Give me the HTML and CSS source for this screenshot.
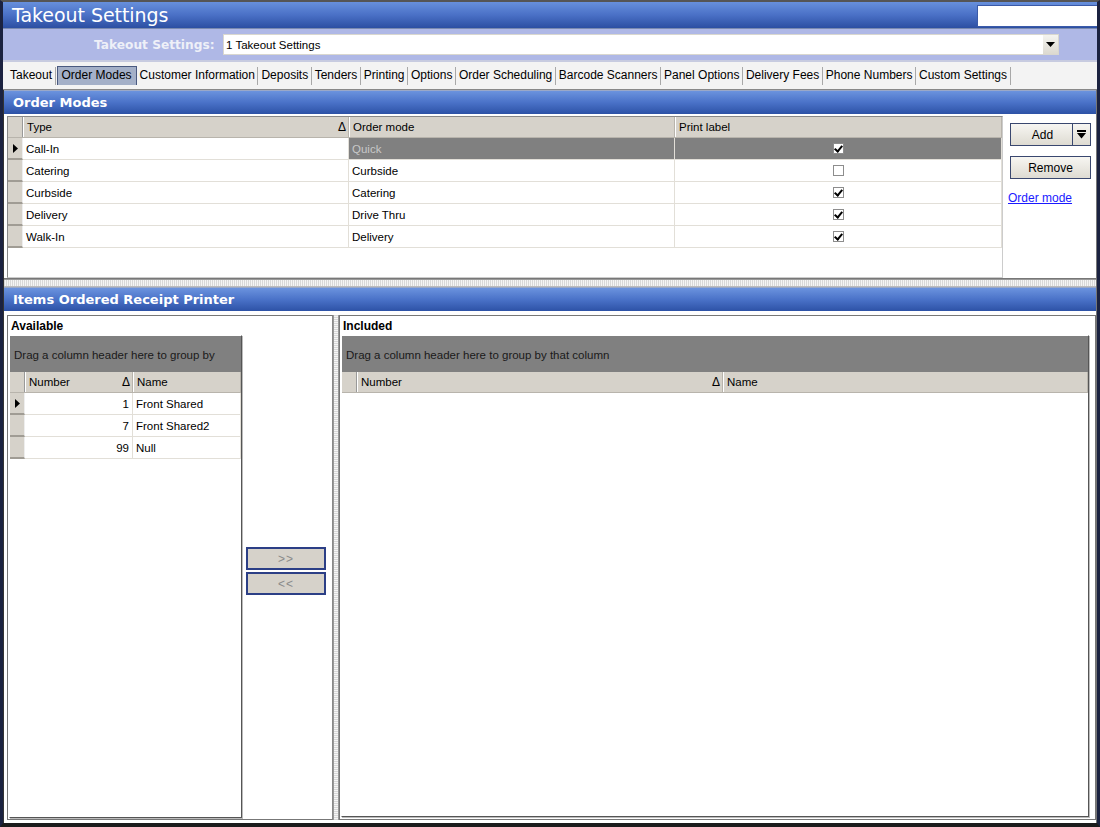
FILE: index.html
```html
<!DOCTYPE html>
<html>
<head>
<meta charset="utf-8">
<link rel="stylesheet" href="styles.css">
</head>
<body>
<div class="window">
  <div class="titlebar">
    <span class="title">Takeout Settings</span>
    <div class="title-box"></div>
  </div>
  <div class="settings-row">
    <span class="settings-label">Takeout Settings:</span>
    <div class="combo">
      <span class="combo-text">1 Takeout Settings</span>
      <span class="combo-btn"><svg width="9" height="6" viewBox="0 0 9 6"><path d="M0 0H9L4.5 5Z" fill="#000"/></svg></span>
    </div>
  </div>
  <div class="tabs">
    <span class="tab">Takeout</span>
    <span class="tab active">Order Modes</span>
    <span class="tab">Customer Information</span>
    <span class="tab">Deposits</span>
    <span class="tab">Tenders</span>
    <span class="tab">Printing</span>
    <span class="tab">Options</span>
    <span class="tab">Order Scheduling</span>
    <span class="tab">Barcode Scanners</span>
    <span class="tab">Panel Options</span>
    <span class="tab">Delivery Fees</span>
    <span class="tab">Phone Numbers</span>
    <span class="tab">Custom Settings</span>
  </div>
  <div class="page">
    <div class="section-header">Order Modes</div>
    <div class="modes-panel">
      <div class="grid modes-grid">
        <div class="grow head">
          <div class="ind"></div>
          <div class="cell c-type">Type<span class="sort">&#916;</span></div>
          <div class="cell c-mode">Order mode</div>
          <div class="cell c-print">Print label</div>
        </div>
        <div class="grow sel">
          <div class="ind"><svg width="5" height="9" viewBox="0 0 5 9"><path d="M0 0L5 4.5L0 9Z" fill="#000"/></svg></div>
          <div class="cell c-type white">Call-In</div>
          <div class="cell c-mode dark">Quick</div>
          <div class="cell c-print dark center"><span class="chk on"></span></div>
        </div>
        <div class="grow">
          <div class="ind"></div>
          <div class="cell c-type">Catering</div>
          <div class="cell c-mode">Curbside</div>
          <div class="cell c-print center"><span class="chk"></span></div>
        </div>
        <div class="grow">
          <div class="ind"></div>
          <div class="cell c-type">Curbside</div>
          <div class="cell c-mode">Catering</div>
          <div class="cell c-print center"><span class="chk on"></span></div>
        </div>
        <div class="grow">
          <div class="ind"></div>
          <div class="cell c-type">Delivery</div>
          <div class="cell c-mode">Drive Thru</div>
          <div class="cell c-print center"><span class="chk on"></span></div>
        </div>
        <div class="grow">
          <div class="ind"></div>
          <div class="cell c-type">Walk-In</div>
          <div class="cell c-mode">Delivery</div>
          <div class="cell c-print center"><span class="chk on"></span></div>
        </div>
      </div>
      <div class="side">
        <div class="btn split"><span class="btn-main">Add</span><span class="btn-drop"><svg width="9" height="9" viewBox="0 0 9 9"><rect x="0" y="0" width="9" height="2" fill="#000"/><path d="M0 3H9L4.5 8.5Z" fill="#000"/></svg></span></div>
        <div class="btn">Remove</div>
        <a class="link">Order mode</a>
      </div>
    </div>
    <div class="splitter"></div>
    <div class="section-header">Items Ordered Receipt Printer</div>
    <div class="lower">
      <div class="avail">
        <div class="panel-label">Available</div>
        <div class="grid2 avail-grid">
          <div class="groupby">Drag a column header here to group by</div>
          <div class="grow head">
            <div class="ind"></div>
            <div class="cell a-num">Number<span class="sort">&#916;</span></div>
            <div class="cell a-name">Name</div>
          </div>
          <div class="grow">
            <div class="ind"><svg width="5" height="9" viewBox="0 0 5 9"><path d="M0 0L5 4.5L0 9Z" fill="#000"/></svg></div>
            <div class="cell a-num right">1</div>
            <div class="cell a-name">Front Shared</div>
          </div>
          <div class="grow">
            <div class="ind"></div>
            <div class="cell a-num right">7</div>
            <div class="cell a-name">Front Shared2</div>
          </div>
          <div class="grow">
            <div class="ind"></div>
            <div class="cell a-num right">99</div>
            <div class="cell a-name">Null</div>
          </div>
        </div>
        <div class="movers">
          <div class="mv">&gt;&gt;</div>
          <div class="mv">&lt;&lt;</div>
        </div>
      </div>
      <div class="vsplit"></div>
      <div class="incl">
        <div class="panel-label">Included</div>
        <div class="grid2 incl-grid">
          <div class="groupby">Drag a column header here to group by that column</div>
          <div class="grow head">
            <div class="ind"></div>
            <div class="cell i-num">Number<span class="sort">&#916;</span></div>
            <div class="cell i-name">Name</div>
          </div>
        </div>
      </div>
    </div>
  </div>
</div>
</body>
</html>
```
FILE: styles.css
```css
* { box-sizing: border-box; }
html, body { margin: 0; padding: 0; }
body {
  width: 1100px;
  height: 827px;
  overflow: hidden;
  font-family: "Liberation Sans", Arial, sans-serif;
  font-size: 11.5px;
  color: #000;
  background: #1b1f33;
}
.window {
  width: 1100px;
  height: 827px;
  border-top: 2px solid #555;
  border-left: 3px solid #1b2240;
  border-right: 3px solid #1b2240;
  border-bottom: 4px solid #1b1b1b;
  display: flex;
  flex-direction: column;
  background: #fff;
}
.titlebar {
  height: 27px;
  flex: none;
  display: flex;
  align-items: center;
  justify-content: space-between;
  background: linear-gradient(#6790dc, #4a70c6 50%, #2c4fa2);
  border-bottom: 1px solid #7a8ab0;
}
.title {
  color: #fff;
  font-size: 19px;
  padding-left: 9px;
  font-family: "DejaVu Sans", Verdana, sans-serif;
  letter-spacing: -0.05px;
}
.title-box {
  width: 120px;
  height: 22px;
  background: #fff;
  border: 1px solid #3a5aa8;
  border-right: none;
  align-self: flex-start;
  margin-top: 3px;
}
.settings-row {
  height: 31px;
  flex: none;
  background: #afb8e6;
  display: flex;
  align-items: center;
  padding-left: 91px;
}
.settings-label {
  font-family: "DejaVu Sans", Verdana, sans-serif;
  font-weight: bold;
  font-size: 12.2px;
  color: #eef0f8;
  width: 129px;
}
.combo {
  width: 836px;
  height: 21px;
  background: #fff;
  border: 1px solid #d9d7cf;
  display: flex;
  align-items: center;
  justify-content: space-between;
}
.combo-text { padding-left: 2px; font-size: 11.5px; }
.combo-btn {
  width: 15px;
  height: 19px;
  background: linear-gradient(#f5f4f0, #dcd9d0);
  display: flex;
  align-items: center;
  justify-content: center;
}
.tabs {
  height: 30px;
  flex: none;
  display: flex;
  align-items: center;
  background: #f3f3f3;
  border-top: 2px solid #c7cbe0;
  padding-left: 4px;
  border-bottom: 1px solid #888;
  font-size: 12px;
}
.tab {
  padding: 1px 2.5px 2px 3px;
  border-right: 1px solid #a8a8a8;
  line-height: 15px;
  white-space: nowrap;
}
.tab.active {
  background: #a4b0c8;
  border: 1px solid #4a5a80;
  border-bottom: none;
  padding: 1px 4px 2px 4px;
  margin-left: 1px;
}
.page {
  flex: 1;
  display: flex;
  flex-direction: column;
  border-left: 1px solid #333;
  border-right: 1px solid #777;
  min-height: 0;
}
.section-header {
  height: 24px;
  flex: none;
  background: linear-gradient(#6b93de, #4a72c8 50%, #2d52a6);
  color: #fff;
  font-family: "DejaVu Sans", Verdana, sans-serif;
  font-weight: bold;
  font-size: 13px;
  display: flex;
  align-items: center;
  padding-left: 9px;
  border-top: 1px solid #9aa8c8;
}
.modes-panel {
  height: 165px;
  flex: none;
  display: flex;
  padding: 2px 0 2px 3px;
  background: #fff;
  border-bottom: 1px solid #777;
}
.grid {
  border: 1px solid #888;
  border-right-color: #ccc;
  border-bottom-color: #ccc;
  background: #fff;
}
.modes-grid {
  width: 996px;
  height: 162px;
}
.grow {
  display: flex;
  height: 22px;
}
.grow.head {
  height: 21px;
  background: #d6d2ca;
  border-bottom: 1px solid #b8b4ac;
}
.ind {
  width: 15px;
  flex: none;
  background: #d6d2ca;
  border-bottom: 2px solid #a09c94;
  border-right: 1px solid #eee;
  display: flex;
  align-items: center;
  justify-content: center;
}
.head .ind { border-bottom: none; border-right: 1px solid #999; }
.cell {
  display: flex;
  align-items: center;
  padding-left: 3px;
  border-right: 1px solid #e2dfd8;
  border-bottom: 1px solid #e2dfd8;
  white-space: nowrap;
  position: relative;
}
.head .cell { border-right: 1px solid #b8b4ac; border-left: 1px solid #fff; border-bottom: none; }
.head .cell:first-of-type { border-left: none; }
.sort {
  margin-left: auto;
  padding-right: 2px;
  font-size: 12px;
}
.c-type { width: 326px; }
.c-mode { width: 326px; }
.c-print { width: 327px; }
.center { justify-content: center; padding-left: 0; }
.right { justify-content: flex-end; padding-right: 3px; }
.dark { background: #808080; color: #c8c8c8; }
.chk {
  width: 11px;
  height: 11px;
  background: #fff;
  border: 1px solid #8d8d8d;
  position: relative;
  margin-left: 1px;
}
.chk.on::after {
  content: "";
  position: absolute;
  left: 2px;
  top: 0px;
  width: 3px;
  height: 6px;
  border-right: 2px solid #000;
  border-bottom: 2px solid #000;
  transform: rotate(40deg);
}
.side {
  flex: 1;
  display: flex;
  flex-direction: column;
  padding: 7px 0 0 5px;
}
.btn {
  width: 81px;
  height: 23px;
  border: 1px solid #39476f;
  background: linear-gradient(#f7f6f2, #dedbd2);
  display: flex;
  align-items: center;
  justify-content: center;
  font-size: 12px;
  margin-left: 2px;
  margin-bottom: 10px;
}
.btn.split { justify-content: flex-start; }
.btn-main { flex: 1; text-align: center; padding-left: 2px; }
.btn-drop {
  width: 18px;
  height: 100%;
  border-left: 1px solid #39476f;
  display: flex;
  align-items: center;
  justify-content: center;
}
.link {
  color: #1a1aff;
  text-decoration: underline;
  margin-top: 2px;
  font-size: 12px;
}
.splitter {
  height: 8px;
  flex: none;
  background: repeating-linear-gradient(90deg, #d8d8d8 0 1px, #f4f4f4 1px 2px);
  border-top: 1px solid #999;
  border-bottom: 1px solid #bbb;
}
.lower {
  flex: 1;
  display: flex;
  padding: 4px 0 3px 3px;
  background: #fff;
  min-height: 0;
}
.avail {
  width: 326px;
  border: 1px solid #777;
  border-right-color: #888;
  display: flex;
  flex-wrap: wrap;
  align-content: flex-start;
  position: relative;
  padding: 0 0 2px 1px;
}
.panel-label {
  width: 100%;
  font-weight: bold;
  height: 19px;
  display: flex;
  align-items: center;
  padding-left: 2px;
  font-size: 12px;
}
.grid2 {
  border: 1px solid #fff;
  border-right: 1px solid #555;
  border-bottom: 1px solid #555;
  background: #fff;
  box-shadow: 1px 1px 0 #bbb;
}
.avail-grid {
  width: 233px;
  height: 483px;
}
.groupby {
  height: 36px;
  background: #808080;
  color: #1a1a1a;
  display: flex;
  align-items: center;
  padding-left: 4px;
  padding-top: 2px;
}
.a-num { width: 108px; }
.a-name { width: 108px; }
.movers {
  position: absolute;
  left: 238px;
  top: 231px;
  display: flex;
  flex-direction: column;
  gap: 2px;
}
.mv {
  width: 80px;
  height: 23px;
  background: #d6d2ca;
  border: 2px solid #2c3f86;
  color: #8a8a8a;
  display: flex;
  align-items: center;
  justify-content: center;
  font-size: 12px;
  letter-spacing: 1px;
}
.vsplit {
  width: 6px;
  flex: none;
  background: repeating-linear-gradient(0deg, #d8d8d8 0 1px, #f6f6f6 1px 2px);
  border-left: 1px solid #999;
  border-right: 1px solid #999;
}
.incl {
  flex: 1;
  border: 1px solid #777;
  padding: 0 6px 2px 1px;
  display: flex;
  flex-direction: column;
}
.incl-grid {
  flex: 1;
}
.i-num { width: 366px; }
.i-name { flex: 1; }
```
